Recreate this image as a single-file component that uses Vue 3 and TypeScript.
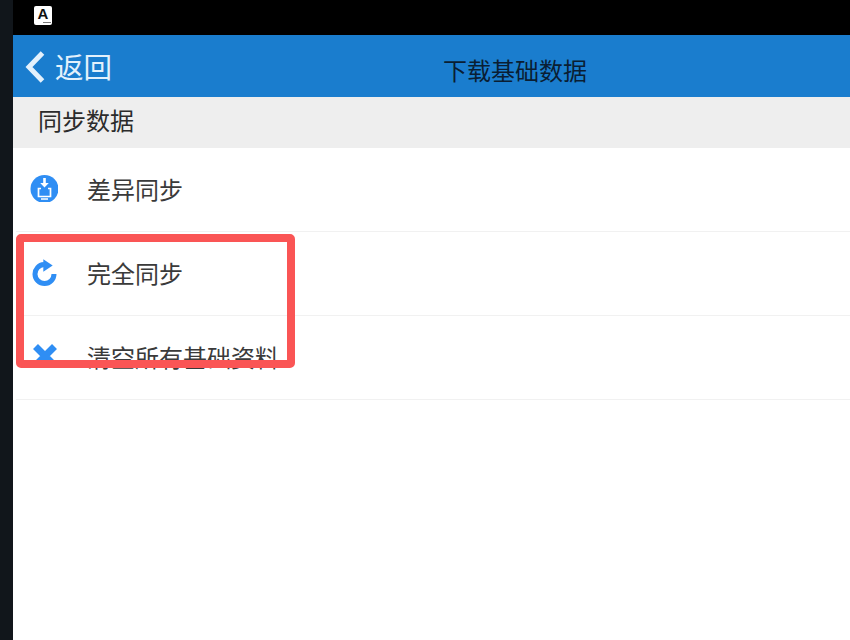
<script setup lang="ts">
const rows = [
  { id: 'diff', label: '差异同步' },
  { id: 'full', label: '完全同步' },
  { id: 'clear', label: '清空所有基础资料' },
]
</script>

<template>
  <div class="screen">
    <div class="edge"></div>
    <div class="device">
      <div class="status">
        <div class="app-badge">
          <span class="app-letter">A</span>
          <span class="app-sub"></span>
        </div>
      </div>
      <header class="nav">
        <div class="back">
          <svg class="chevron" width="22" height="34" viewBox="0 0 22 34">
            <path d="M18.500 3 L5 17 L18.500 31" fill="none" stroke="#e3f1fc" stroke-width="5" />
          </svg>
          <span class="back-text">返回</span>
        </div>
        <div class="title">下载基础数据</div>
      </header>
      <div class="section">同步数据</div>
      <ul class="list">
        <li v-for="row in rows" :key="row.id" class="row">
          <span class="icon">
            <svg v-if="row.id === 'diff'" width="28" height="28" viewBox="0 0 28 28">
              <circle cx="14.500" cy="15" r="14" fill="#2f8ef4" />
              <path d="M13.200 4h2.600v5h3l-4.300 4.500-4.300-4.500h3z" fill="#fff" />
              <path d="M11 14.500H8.500v8h12v-8H18" fill="none" stroke="#fff" stroke-width="1.700" />
              <path d="M11 25h7" stroke="#fff" stroke-width="1.500" />
            </svg>
            <svg v-else-if="row.id === 'full'" width="28" height="28" viewBox="0 0 28 28">
              <path d="M14 6.500 A9.500 9.500 0 1 0 24 16" fill="none" stroke="#2f8ef4" stroke-width="5" />
              <path d="M13.300 1.300 L22.700 7.500 L13.300 13.700z" fill="#2f8ef4" />
            </svg>
            <svg v-else width="28" height="28" viewBox="0 0 28 28">
              <path d="M5.500 4.500 L24.500 23.500 M24.500 4.500 L5.500 23.500" fill="none" stroke="#2f8ef4" stroke-width="7" />
            </svg>
          </span>
          <span class="label">{{ row.label }}</span>
        </li>
      </ul>
    </div>
    <div class="mark"></div>
  </div>
</template>

<style scoped>
.screen {
  position: relative;
  display: flex;
  width: 850px;
  height: 640px;
  overflow: hidden;
  font-family: "Noto Sans CJK SC", "Liberation Sans", sans-serif;
}

.edge {
  width: 13px;
  background: #11161b;
  flex-shrink: 0;
}

.device {
  flex: 1;
  background: #fff;
}

.status {
  height: 35px;
  background: #000;
  padding: 6px 0 0 21px;
  box-sizing: border-box;
}

.app-badge {
  display: flex;
  flex-direction: column;
  align-items: center;
  width: 18px;
  height: 19px;
  background: #fff;
  border-radius: 2px;
}

.app-letter {
  font-family: "Liberation Sans", sans-serif;
  font-size: 15px;
  font-weight: 700;
  line-height: 15px;
  color: #111;
}

.app-sub {
  width: 8px;
  height: 1px;
  margin-top: 1px;
  margin-left: 8px;
  background: #777;
}

.nav {
  position: relative;
  display: flex;
  align-items: center;
  height: 62px;
  background: #1a7dce;
}

.back {
  display: flex;
  align-items: center;
  gap: 9px;
  padding-left: 11px;
  font-size: 28.5px;
  color: #e3f1fc;
}

.chevron {
  margin-top: 2px;
}

.back-text {
  margin-top: -2px;
}

.title {
  position: absolute;
  left: 430px;
  top: 0;
  line-height: 69px;
  font-size: 24px;
  color: #0a1e33;
}

.section {
  height: 51px;
  padding-left: 25px;
  background: #eeeeee;
  font-size: 24px;
  line-height: 46px;
  color: #2b2b2b;
}

.list {
  margin: 0;
  padding: 0 0 0 3px;
  list-style: none;
}

.row {
  display: flex;
  align-items: center;
  height: 80px;
  border-bottom: 1px solid #f1f1f1;
  padding-bottom: 3px;
}

.icon {
  display: flex;
  width: 28px;
  margin-left: 14px;
}

.label {
  margin-left: 29px;
  font-size: 24px;
  color: #3a3a3a;
}

.mark {
  position: absolute;
  left: 16px;
  top: 234px;
  width: 279px;
  height: 134px;
  box-sizing: border-box;
  border: 8px solid #fa5555;
  border-radius: 5px;
}
</style>
